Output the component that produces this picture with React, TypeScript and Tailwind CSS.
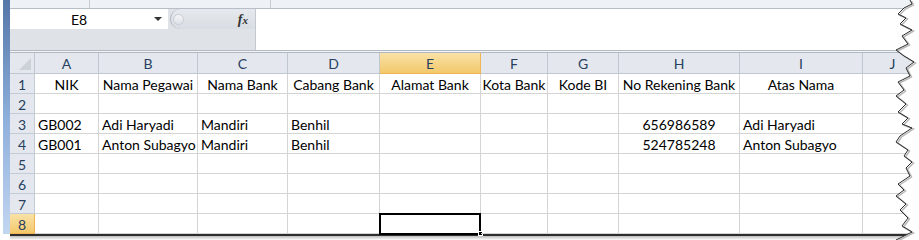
import clsx from 'clsx';

const cols = [
  { key: 'A', w: 'w-[64px]' },
  { key: 'B', w: 'w-[99px]' },
  { key: 'C', w: 'w-[90px]' },
  { key: 'D', w: 'w-[92px]' },
  { key: 'E', w: 'w-[101px]' },
  { key: 'F', w: 'w-[67px]' },
  { key: 'G', w: 'w-[71px]' },
  { key: 'H', w: 'w-[121px]' },
  { key: 'I', w: 'w-[123px]' },
  { key: 'J', w: 'w-[60px]' },
];

const head = ['NIK', 'Nama Pegawai', 'Nama Bank', 'Cabang Bank', 'Alamat Bank', 'Kota Bank', 'Kode BI', 'No Rekening Bank', 'Atas Nama', ''];

const rows: { n: number; cells: string[]; center?: boolean }[] = [
  { n: 1, cells: head, center: true },
  { n: 2, cells: [] },
  { n: 3, cells: ['GB002', 'Adi Haryadi', 'Mandiri', 'Benhil', '', '', '', '656986589', 'Adi Haryadi', ''] },
  { n: 4, cells: ['GB001', 'Anton Subagyo', 'Mandiri', 'Benhil', '', '', '', '524785248', 'Anton Subagyo', ''] },
  { n: 5, cells: [] },
  { n: 6, cells: [] },
  { n: 7, cells: [] },
  { n: 8, cells: [] },
];

// torn right edge of the screenshot clipping
const tear = [
  [30, 0], [32, 4], [24, 8], [18, 14], [26, 18], [20, 24], [32, 30], [22, 36], [28, 44], [16, 50],
  [24, 56], [34, 62], [26, 68], [30, 76], [18, 82], [24, 90], [16, 96], [26, 104], [18, 112], [28, 118],
  [22, 124], [32, 128], [20, 136], [16, 142], [28, 150], [24, 156], [32, 162], [26, 168], [30, 176],
  [18, 184], [24, 190], [16, 196], [26, 204], [20, 210], [28, 218], [22, 226], [32, 232], [24, 236], [16, 240],
];

function TornEdge() {
  const pts = tear.map(([x, y]) => `${x},${y}`).join(' ');
  const shadow = tear.map(([x, y]) => `${x + 1.5},${y + 1}`).join(' ');
  return (
    <svg className="absolute right-0 top-0" width="39" height="240" viewBox="0 0 39 240">
      <polygon points={`${pts} 39,240 39,0`} fill="#ffffff" />
      <polyline points={shadow} fill="none" stroke="#b8b8b8" strokeWidth="1.5" />
      <polyline points={pts} fill="none" stroke="#2b2b2b" strokeWidth="1" />
    </svg>
  );
}

export default function App() {
  return (
    <div className="relative flex h-[240px] w-[919px] overflow-hidden bg-white font-['Lato',sans-serif] text-[14px] text-black">
      <div className="w-[3px] shrink-0" />
      <div className="h-[234px] w-[7px] shrink-0 bg-gradient-to-b from-[#5676a8] via-[#8eaedb] to-[#c2d6f0]" />

      <div className="flex min-w-0 flex-1 flex-col">
        {/* ribbon bottom */}
        <div className="flex h-[9px] shrink-0 border-b border-[#b7bec8] bg-[#eef1f5]">
          <div className="w-[80px] border-r border-[#c8ced6]" />
          <div className="w-[181px] border-r border-[#c8ced6]" />
        </div>

        {/* name box + formula bar */}
        <div className="flex h-[41px] shrink-0">
          <div className="flex w-[245px] flex-col bg-[#dfe3e8]">
            <div className="flex h-[20px] items-center">
              <div className="flex h-full w-[158px] items-center bg-white">
                <span className="flex-1 pr-[6px] text-center">E8</span>
                <span className="mr-[6px] h-0 w-0 border-x-[4px] border-t-[4px] border-x-transparent border-t-[#333]" />
              </div>
              <div className="ml-[2px] flex h-full flex-1 items-center rounded-l-full border-l border-[#aeb6c0] bg-gradient-to-b from-[#e6e9ed] to-[#d8dde3] pl-[2px]">
                <span className="h-[11px] w-[11px] rounded-full border border-[#c9ced5] bg-gradient-to-b from-[#f4f5f7] to-[#dde1e6]" />
                <span className="ml-auto mr-[7px] font-['Liberation_Serif',serif] text-[14px] font-bold italic text-[#333]">
                  f<span className="text-[11px]">x</span>
                </span>
              </div>
            </div>
            <div className="flex-1" />
          </div>
          <div className="flex-1 border-l border-[#c3c9d1] bg-white" />
        </div>

        {/* separator */}
        <div className="h-[3px] shrink-0 border-y border-[#b2b9c3] bg-[#f3f4f6]" />

        {/* sheet */}
        <div className="flex h-[21px] shrink-0 text-[#27405f]">
          <div className="relative w-[25px] shrink-0 border-r border-b border-[#bfc7d1] bg-[#e4e8ee]">
            <div className="absolute bottom-[3px] right-[3px] h-0 w-0 border-b-[12px] border-l-[12px] border-b-[#ccd1d8] border-l-transparent" />
          </div>
          {cols.map((c) => (
            <div
              key={c.key}
              className={clsx(
                c.w,
                'flex shrink-0 items-center justify-center border-r border-b',
                c.key === 'E'
                  ? 'border-[#f0b455] bg-gradient-to-b from-[#f9e2a6] to-[#f3c86a]'
                  : 'border-[#bfc7d1] bg-[#e4e8ee]',
              )}
            >
              {c.key}
            </div>
          ))}
        </div>

        {rows.map((r) => (
          <div key={r.n} className="flex h-[20px] shrink-0">
            <div
              className={clsx(
                'flex w-[25px] shrink-0 items-center justify-center border-r border-b pt-[1px] text-[#27405f]',
                r.n === 8
                  ? 'border-[#f0b455] bg-gradient-to-b from-[#f9e2a6] to-[#f3c86a]'
                  : 'border-[#c3cbd5] bg-[#e4e8ee]',
              )}
            >
              {r.n}
            </div>
            {cols.map((c, i) => {
              const v = r.cells[i] ?? '';
              const center = r.center || c.key === 'H';
              return (
                <div
                  key={c.key}
                  className={clsx(
                    c.w,
                    'relative flex shrink-0 items-center whitespace-nowrap border-r border-b border-[#d4d4d4] px-[3px] pt-[1px]',
                    center ? 'justify-center' : 'justify-start',
                  )}
                >
                  {v}
                  {r.n === 8 && c.key === 'E' && (
                    <>
                      <div className="absolute -left-[1px] -top-[1px] h-[22px] w-[102px] border-2 border-black" />
                      <div className="absolute -bottom-[3px] -right-[3px] h-[5px] w-[5px] border border-white bg-black" />
                    </>
                  )}
                </div>
              );
            })}
          </div>
        ))}

        <div className="h-[2px] shrink-0 bg-[#2e2e2e]" />
        <div className="h-[4px] shrink-0 bg-gradient-to-b from-[#bdbdbd] to-white" />
      </div>

      <TornEdge />
    </div>
  );
}
